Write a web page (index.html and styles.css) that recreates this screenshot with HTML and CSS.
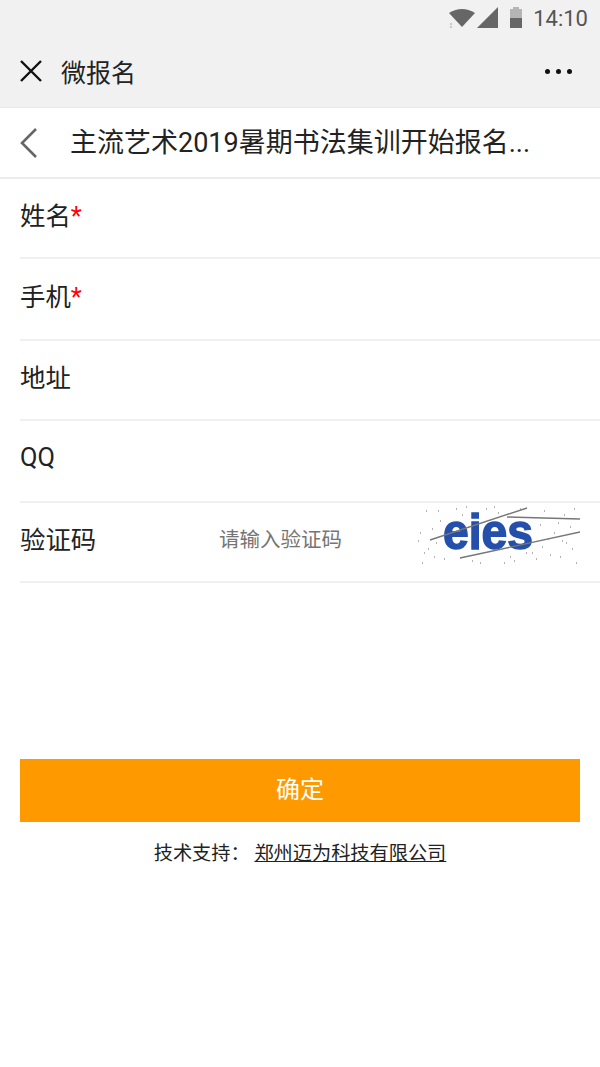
FILE: index.html
```html
<!DOCTYPE html>
<html lang="en">
<head>
    <meta charset="UTF-8">
    <meta name="viewport" content="width=device-width, initial-scale=1.0">
    <title>微报名</title>
    <link rel="stylesheet" href="styles.css">
</head>
<body>
    <div class="topbar">
        <div class="status">
            <svg class="wifi" width="26" height="22" viewBox="0 0 26 22">
                <path d="M0 6 Q13 -2 26 6 L13 20 Z" fill="#666"/>
                <circle cx="2" cy="17" r="1.2" fill="#ccc"/>
                <circle cx="2" cy="20" r="1.2" fill="#ccc"/>
            </svg>
            <svg class="signal" width="21" height="22" viewBox="0 0 21 22">
                <path d="M0 21 L21 0 V21 Z" fill="#666"/>
            </svg>
            <svg class="battery" width="14" height="22" viewBox="0 0 14 22">
                <rect x="4" y="0" width="6" height="2" fill="#b5b5b5"/>
                <rect x="1" y="2" width="12" height="9" fill="#b5b5b5"/>
                <rect x="1" y="11" width="12" height="10" fill="#666"/>
            </svg>
            <span class="clock">14:10</span>
        </div>
        <div class="titlebar">
            <svg class="close" width="24" height="24" viewBox="0 0 24 24">
                <path d="M2 2 L22 22 M22 2 L2 22" stroke="#111" stroke-width="2.4" fill="none"/>
            </svg>
            <span class="app-name">微报名</span>
            <div class="dots"><i></i><i></i><i></i></div>
        </div>
    </div>

    <div class="nav">
        <svg class="back" width="18" height="30" viewBox="0 0 18 30">
            <path d="M16 1 L2 15 L16 29" stroke="#666" stroke-width="2.6" fill="none"/>
        </svg>
        <h1>主流艺术2019暑期书法集训开始报名...</h1>
    </div>

    <div class="form">
        <div class="row"><label>姓名<em>*</em></label></div>
        <div class="row tall"><label>手机<em>*</em></label></div>
        <div class="row"><label>地址</label></div>
        <div class="row tall"><label>QQ</label></div>
        <div class="row code">
            <label>验证码</label>
            <span class="placeholder">请输入验证码</span>
            <svg class="captcha" width="166" height="64" viewBox="0 0 166 64">
                <path class="captcha-dots" d="M4 38h1M6 30h1M10 50h1M12 8h1M18 26h1M14 46h1M20 54h1M24 8h1M26 18h1M30 56h1M34 28h1M38 20h1M22 40h1M8 60h1M42 6h1M48 12h1M52 4h1M58 58h1M66 60h1M72 6h1M80 4h1M84 10h1M90 60h1M96 54h1M100 58h1M106 6h1M112 50h1M118 50h1M122 56h1M128 44h1M130 8h1M136 52h1M140 30h1M146 54h1M150 12h1M152 40h1M156 24h1M158 46h1M160 6h1M162 60h1M126 22h1M134 36h1M144 20h1M148 38h1"/>
                <text x="29" y="46" class="captcha-text" textLength="90" lengthAdjust="spacingAndGlyphs">eies</text>
                <path class="captcha-lines" d="M16 37 L113 5 M93 14 L166 16 M46 55 L166 29"/>
            </svg>
        </div>
    </div>

    <div class="actions">
        <button>确定</button>
        <p class="support">技术支持： <a href="#">郑州迈为科技有限公司</a></p>
    </div>
</body>
</html>
```

FILE: styles.css
```css
body {
    margin: 0;
    background-color: #fff;
    color: #222;
    font-family: "Roboto", "Noto Sans CJK SC", sans-serif;
    height: 1067px;
    overflow: hidden;
}
.topbar {
    background-color: #f1f1f1;
    height: 107px;
    border-bottom: 1px solid #e8e8e8;
}
.status {
    display: flex;
    align-items: center;
    justify-content: flex-end;
    height: 36px;
    padding-right: 12px;
}
.signal { margin-left: 2px; }
.battery { margin-left: 11px; }
.clock {
    margin-left: 10px;
    font-size: 22px;
    color: #555;
}
.titlebar {
    display: flex;
    align-items: center;
    height: 70px;
    padding: 0 28px 0 19px;
}
.close { flex: none; }
.app-name {
    margin-left: 18px;
    font-size: 25px;
    color: #222;
}
.dots {
    display: flex;
    gap: 6px;
    margin-left: auto;
}
.dots i {
    width: 5px;
    height: 5px;
    border-radius: 50%;
    background-color: #111;
}
.nav {
    display: flex;
    align-items: center;
    box-sizing: border-box;
    height: 71px;
    padding-left: 20px;
    border-bottom: 2px solid #ececec;
}
.nav h1 {
    margin: 0 0 4px 32px;
    font-size: 27px;
    font-weight: 400;
    color: #222;
}
.form { padding-left: 20px; }
.row {
    display: flex;
    align-items: center;
    box-sizing: border-box;
    height: 80px;
    padding-bottom: 8px;
    border-bottom: 2px solid #f0f0f0;
    font-size: 25.4px;
}
.row.tall { height: 82px; }
.row label { width: 199px; }
.row em {
    color: #f00;
    font-style: normal;
}
.code { position: relative; }
.placeholder {
    font-size: 20.5px;
    color: #757575;
}
.captcha {
    position: absolute;
    left: 394px;
    top: 0;
}
.captcha-text {
    font-family: "Liberation Sans", sans-serif;
    font-size: 50px;
    font-weight: 700;
    fill: #2450ac;
    stroke: #2450ac;
    stroke-width: 1.5;
}
.captcha-dots {
    stroke: #999;
    stroke-width: 1.4;
    fill: none;
}
.captcha-lines {
    stroke: #777;
    stroke-width: 1.4;
    fill: none;
}
.actions { padding: 176px 20px 0; }
button {
    display: block;
    width: 100%;
    height: 63px;
    padding: 0 0 7px;
    background-color: #ff9900;
    color: #fff;
    border: none;
    font-family: inherit;
    font-size: 24px;
}
.support {
    margin: 16px 0 0;
    text-align: center;
    font-size: 19.2px;
    color: #222;
}
.support a { color: #222; }
```
